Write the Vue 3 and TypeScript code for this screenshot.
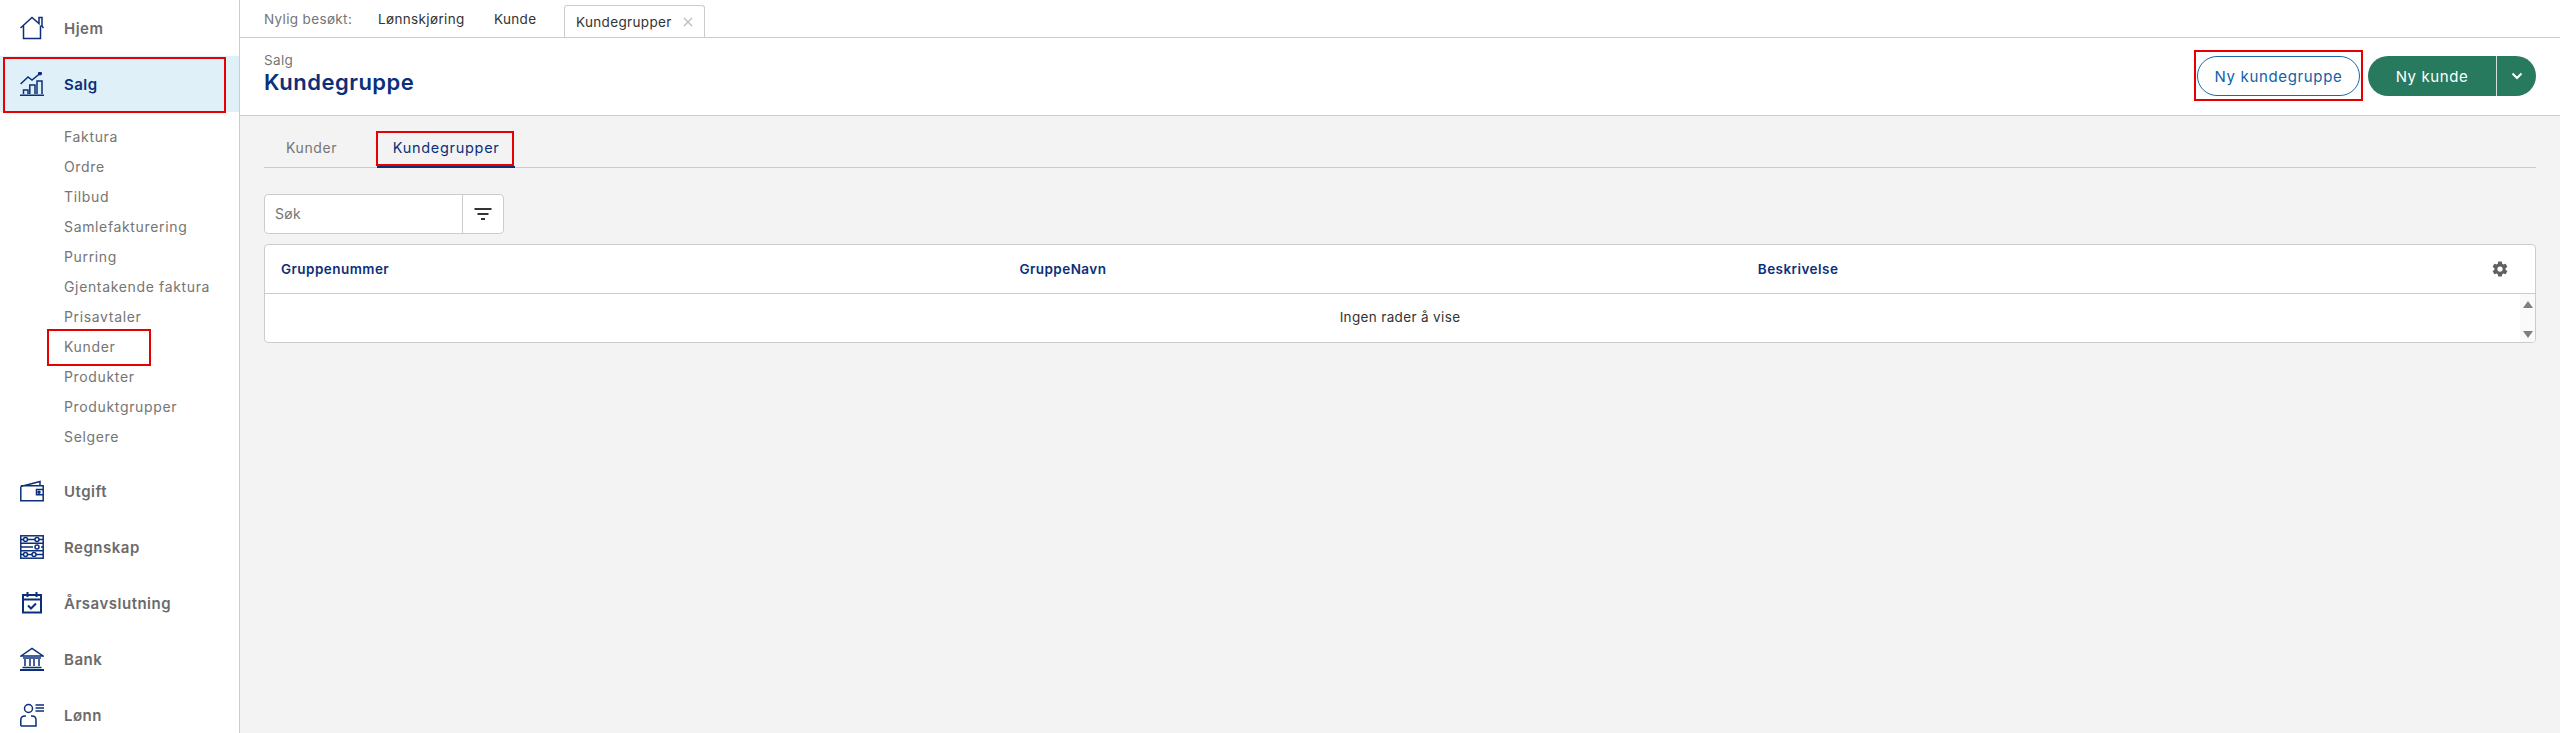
<script setup lang="ts">
const subItems: string[] = ['Faktura','Ordre','Tilbud','Samlefakturering','Purring','Gjentakende faktura','Prisavtaler','Kunder','Produkter','Produktgrupper','Selgere']
const bottomItems: { label: string; icon: string }[] = [
  { label: 'Utgift', icon: 'wallet' },
  { label: 'Regnskap', icon: 'abacus' },
  { label: 'Årsavslutning', icon: 'calendar' },
  { label: 'Bank', icon: 'bank' },
  { label: 'Lønn', icon: 'person' },
]
</script>

<template>
  <div class="app">
    <aside class="side">
      <div class="nav-row">
        <svg class="ico" viewBox="0 0 24 24"><path d="M0.500 12 L12 1.500 L19 7.500 V1.500 H22 V10 L23.500 12 M3.500 9.500 V22.500 H20.500 V9.500" /></svg>
        <span>Hjem</span>
      </div>
      <div class="nav-row active">
        <svg class="ico" viewBox="0 0 24 24"><path d="M0 23.200 H24 M0.600 12 L8 5 L12 8 L20 1.500 M3.500 22 V18 H8 V22 M9.800 22 V13 H15 V22 M17 22 V9 H22 V22" /><circle cx="20" cy="1.500" r="1.300" class="dot" /></svg>
        <span>Salg</span>
      </div>
      <ul class="sub">
        <li v-for="s in subItems" :key="s">{{ s }}</li>
      </ul>
      <div v-for="b in bottomItems" :key="b.label" class="nav-row">
        <svg v-if="b.icon === 'wallet'" class="ico" viewBox="0 0 24 24"><path d="M0.800 7.500 L20 2.500 V6.800 M0.800 7.500 V21.800 H23.200 V6.800 H0.800 M23.200 10.500 H16.500 V15.800 H23.200" /><circle cx="19" cy="13.200" r="1" class="dot" /></svg>
        <svg v-else-if="b.icon === 'abacus'" class="ico" viewBox="0 0 24 24"><rect x="0.800" y="0.800" width="22.400" height="22.400" /><path d="M0.800 8.300 H23.200 M0.800 15.800 H23.200 M0.800 4.500 H3.500 M7.500 4.500 H15 M19 4.500 H23.200 M0.800 12 H13 M21 12 H23.200 M0.800 19.500 H3.500 M7.500 19.500 H12 M16 19.500 H23.200" /><circle cx="5.500" cy="4.500" r="2" /><circle cx="17" cy="4.500" r="2" /><circle cx="17" cy="12" r="2" /><circle cx="5.500" cy="19.500" r="2" /><circle cx="14" cy="19.500" r="2" /></svg>
        <svg v-else-if="b.icon === 'calendar'" class="ico" viewBox="0 0 24 24"><path d="M3 4 H21 V21.500 H3 Z M3 8.500 H21 M7.500 1 V6 M16.500 1 V6 M8 14.500 L11 17.500 L16 12.500" class="thick" /></svg>
        <svg v-else-if="b.icon === 'bank'" class="ico" viewBox="0 0 24 24"><path d="M1 9 L12 1.500 L23 9 Z M3 11 H21 M5 12 V19 M10 12 V19 M14 12 V19 M19 12 V19 M2.500 20.500 H21.500" /><path d="M0 23 H24" class="thick" /></svg>
        <svg v-else class="ico" viewBox="0 0 24 24"><circle cx="8.500" cy="5.500" r="4" /><path d="M0.800 23 V17 Q0.800 13 5 13 H6 M11 13 H12 Q16 13 16 17 V23 H0.800 M15.500 2 H24 M15.500 5 H24 M15.500 8 H24" /></svg>
        <span>{{ b.label }}</span>
      </div>
    </aside>

    <main class="main">
      <div class="recent">
        <span class="recent-label">Nylig besøkt:</span>
        <span class="recent-link first">Lønnskjøring</span>
        <span class="recent-link second">Kunde</span>
        <div class="recent-tab">Kundegrupper
          <svg class="x" viewBox="0 0 10 10"><path d="M1 1 L9 9 M9 1 L1 9" /></svg>
        </div>
      </div>

      <header class="head">
        <div class="titles">
          <div class="crumb">Salg</div>
          <h1>Kundegruppe</h1>
        </div>
        <div class="actions">
          <button class="btn-outline">Ny kundegruppe</button>
          <div class="btn-split">
            <span class="split-main">Ny kunde</span>
            <span class="split-arrow">
              <svg viewBox="0 0 12 8"><path d="M1.500 1.500 L6 6 L10.500 1.500" /></svg>
            </span>
          </div>
        </div>
      </header>

      <section class="content">
        <nav class="tabs">
          <span class="tab">Kunder</span>
          <span class="tab sel">Kundegrupper</span>
        </nav>

        <div class="search">
          <span class="search-text">Søk</span>
          <span class="filter">
            <svg viewBox="0 0 18 12"><path d="M0.500 1 H17.500 M3.500 6 H14.500 M7 11 H11" /></svg>
          </span>
        </div>

        <div class="table">
          <div class="thead">
            <span class="col">Gruppenummer</span>
            <span class="col">GruppeNavn</span>
            <span class="col">Beskrivelse</span>
            <svg class="gear" viewBox="0 0 24 24"><path fill-rule="evenodd" d="M19.400 13c.05-.33.07-.66.07-1s-.02-.67-.07-1l2.110-1.630c.19-.15.24-.42.12-.64l-2-3.460c-.12-.22-.39-.3-.61-.22l-2.490 1c-.52-.4-1.080-.73-1.690-.98l-.38-2.650A.49.490 0 0 0 14 2h-4c-.25 0-.46.18-.49.420l-.38 2.650c-.61.250-1.170.59-1.690.98l-2.490-1c-.23-.09-.49 0-.61.220l-2 3.460c-.13.220-.07.490.12.640L4.570 11c-.04.330-.07.67-.07 1s.03.670.07 1l-2.110 1.630c-.19.150-.25.420-.12.640l2 3.460c.12.220.39.300.61.220l2.490-1c.52.400 1.080.730 1.690.980l.38 2.650c.03.240.24.420.49.420h4c.25 0 .46-.18.49-.42l.38-2.650c.61-.25 1.170-.59 1.690-.98l2.490 1c.23.09.49 0 .61-.22l2-3.460c.12-.22.07-.49-.12-.64L19.400 13zM12 15.500a3.500 3.500 0 1 1 0-7 3.500 3.500 0 0 1 0 7z" /></svg>
          </div>
          <div class="tbody">
            <span class="empty">Ingen rader å vise</span>
            <div class="scroll">
              <span class="tri up"></span>
              <span class="tri down"></span>
            </div>
          </div>
        </div>
      </section>
    </main>

    <div class="mark-box mb-salg"></div>
    <div class="mark-box mb-kunder"></div>
    <div class="mark-box mb-tab"></div>
    <div class="mark-box mb-btn"></div>
  </div>
</template>

<style>
html, body { margin: 0; background: #fff; }
</style>

<style scoped>
.app {
  position: relative;
  display: flex;
  width: 2560px;
  height: 733px;
  overflow: hidden;
  font-family: Inter, "Liberation Sans", sans-serif;
  font-size: 14px;
  letter-spacing: 0.35px;
  color: #333;
}
.side {
  width: 239px;
  flex: none;
  border-right: 1px solid #ccc;
  background: #fff;
}
.nav-row {
  height: 56px;
  display: flex;
  align-items: center;
  padding-left: 20px;
  gap: 20px;
  font-weight: 600;
  color: #6b6b6b;
  font-size: 15px;
  letter-spacing: 0.5px;
}
.nav-row.active {
  background: #dff0f8;
  color: #0b2f7a;
}
.ico {
  width: 24px;
  height: 24px;
  flex: none;
  fill: none;
  stroke: #0b2f7a;
  stroke-width: 1.500;
}
.ico .dot { fill: #0b2f7a; }
.ico .thick { stroke-width: 2; }
.sub {
  list-style: none;
  margin: 0;
  padding: 10px 0 11px 64px;
}
.sub li {
  height: 30px;
  line-height: 30px;
  color: #757575;
  font-size: 14px;
  letter-spacing: 0.65px;
}
.main {
  flex: 1;
  display: flex;
  flex-direction: column;
  min-width: 0;
}
.recent {
  height: 37px;
  display: flex;
  align-items: flex-end;
  padding-left: 24px;
  border-bottom: 1px solid #ccc;
  flex: none;
}
.recent-label {
  color: #757575;
  font-size: 13.500px;
  align-self: center;
  width: 114px;
}
.recent-link {
  align-self: center;
  color: #333;
  font-size: 13.500px;
}
.first { width: 116px; }
.second { width: 70px; }
.recent-tab {
  height: 32px;
  box-sizing: border-box;
  padding: 0 11px;
  width: 141px;
  border: 1px solid #ccc;
  border-bottom: none;
  border-radius: 3px 3px 0 0;
  display: flex;
  align-items: center;
  justify-content: space-between;
  color: #333;
  font-size: 13.500px;
  white-space: nowrap;
}
.x { width: 10px; height: 10px; stroke: #bbb; stroke-width: 1.300; fill: none; }
.head {
  height: 78px;
  flex: none;
  box-sizing: border-box;
  border-bottom: 1px solid #ccc;
  display: flex;
  justify-content: space-between;
  align-items: flex-start;
  padding: 0 24px;
}
.crumb {
  margin-top: 14px;
  font-size: 13.500px;
  line-height: 16px;
  color: #757575;
}
h1 {
  margin: 1px 0 0;
  font-size: 22px;
  line-height: 26px;
  font-weight: 600;
  letter-spacing: 0.5px;
  color: #0b2f7a;
}
.actions {
  display: flex;
  gap: 8px;
  margin-top: 18px;
}
.btn-outline {
  width: 163px;
  height: 40px;
  border: 1px solid #1a6aae;
  border-radius: 20px;
  background: #fff;
  color: #0f62a8;
  font: inherit;
  font-size: 15px;
  letter-spacing: 0.65px;
  padding: 0;
}
.btn-split {
  width: 168px;
  height: 40px;
  border-radius: 20px;
  background: #277a5e;
  color: #fff;
  display: flex;
  font-size: 15px;
  letter-spacing: 0.6px;
}
.split-main {
  width: 128px;
  display: flex;
  align-items: center;
  justify-content: center;
  border-right: 1px solid #cfe3dc;
}
.split-arrow {
  flex: 1;
  display: flex;
  align-items: center;
  justify-content: center;
}
.split-arrow svg { width: 12px; height: 8px; fill: none; stroke: #fff; stroke-width: 2; }
.content {
  flex: 1;
  background: #f3f3f3;
  padding: 0 24px;
}
.tabs {
  height: 52px;
  box-sizing: border-box;
  border-bottom: 1px solid #ccc;
  display: flex;
  align-items: stretch;
}
.tab {
  display: flex;
  align-items: center;
  padding: 12px 22px 0;
  color: #757575;
  font-size: 14px;
  letter-spacing: 0.6px;
  box-sizing: border-box;
}
.tab.sel {
  margin-left: 18px;
  padding: 12px 0 0;
  width: 138px;
  justify-content: center;
  color: #0b2f7a;
  font-size: 14.500px;
  letter-spacing: 0.7px;
  border-bottom: 2px solid #0b2f7a;
  margin-bottom: -1px;
}
.search {
  margin-top: 26px;
  width: 240px;
  height: 40px;
  box-sizing: border-box;
  border: 1px solid #ccc;
  border-radius: 4px;
  background: #fff;
  display: flex;
}
.search-text {
  flex: 1;
  padding-left: 10px;
  line-height: 38px;
  color: #757575;
  font-size: 14px;
}
.filter {
  width: 40px;
  border-left: 1px solid #ccc;
  display: flex;
  align-items: center;
  justify-content: center;
}
.filter svg { width: 18px; height: 12px; stroke: #333; stroke-width: 2; fill: none; }
.table {
  margin-top: 10px;
  width: 2272px;
  height: 99px;
  box-sizing: border-box;
  border: 1px solid #ccc;
  border-radius: 4px;
  background: #fff;
  overflow: hidden;
}
.thead {
  height: 49px;
  box-sizing: border-box;
  border-bottom: 1px solid #ccc;
  display: flex;
  align-items: center;
  padding-left: 16px;
  position: relative;
}
.col {
  width: 738.400px;
  flex: none;
  font-weight: 600;
  color: #0b2f7a;
  font-size: 13.500px;
  letter-spacing: 0.45px;
}
.gear {
  position: absolute;
  right: 26px;
  top: 15px;
  width: 18px;
  height: 18px;
  fill: #616161;
}
.tbody {
  height: 48px;
  display: flex;
  align-items: center;
  justify-content: center;
  position: relative;
  box-sizing: border-box;
  padding-bottom: 3px;
  font-size: 13.500px;
  color: #333;
}
.scroll {
  position: absolute;
  top: 0;
  right: 0;
  bottom: 0;
  width: 15px;
  background: #fafafa;
  display: flex;
  flex-direction: column;
  justify-content: space-between;
  align-items: center;
  padding: 7px 0 4px;
  box-sizing: border-box;
}
.tri {
  width: 0;
  height: 0;
  border-left: 5px solid transparent;
  border-right: 5px solid transparent;
}
.tri.up { border-bottom: 7px solid #808080; }
.tri.down { border-top: 7px solid #808080; }
.mark-box {
  position: absolute;
  box-sizing: border-box;
  border: 2px solid #e60000;
}
.mb-salg { left: 3px; top: 57px; width: 223px; height: 56px; }
.mb-kunder { left: 47px; top: 329px; width: 104px; height: 37px; }
.mb-tab { left: 376px; top: 131px; width: 138px; height: 35px; }
.mb-btn { left: 2194px; top: 50px; width: 169px; height: 51px; }
</style>
